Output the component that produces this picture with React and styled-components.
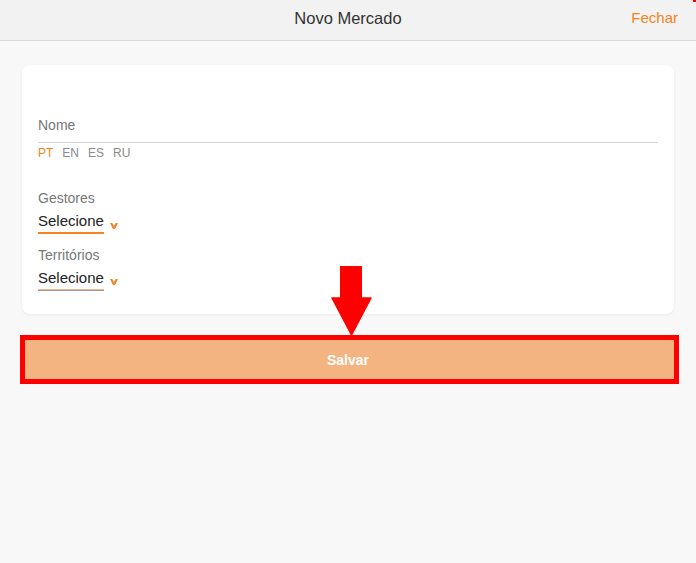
import styled, { createGlobalStyle } from "styled-components";

const GlobalStyle = createGlobalStyle`
  html, body {
    margin: 0;
    padding: 0;
    background: #f8f8f8;
    font-family: "Liberation Sans", Arial, sans-serif;
  }
  * { box-sizing: border-box; }
`;

const Page = styled.div`
  position: relative;
  min-height: 563px;
  background: #f8f8f8;
`;

const Header = styled.header`
  height: 41px;
  display: flex;
  align-items: center;
  justify-content: center;
  position: relative;
  background: #f2f2f2;
  border-bottom: 1px solid #d9d9d9;

  h1 {
    margin: 0;
    font-size: 16.5px;
    font-weight: 400;
    color: #333;
    padding-bottom: 3px;
  }
`;

const CloseLink = styled.a`
  position: absolute;
  right: 18px;
  top: 9px;
  font-size: 15px;
  color: #f58320;
  cursor: pointer;
`;

const Content = styled.main`
  padding: 24px 22px 0;
`;

const Card = styled.section`
  background: #fff;
  border-radius: 8px;
  box-shadow: 0 1px 3px rgba(0, 0, 0, 0.06);
  padding: 52px 16px 24px;
  height: 249px;
`;

const TextField = styled.div`
  label {
    display: block;
    font-size: 14px;
    line-height: 17px;
    color: #777;
    padding-bottom: 8px;
    border-bottom: 1px solid #d6d6d6;
  }
`;

const LangTabs = styled.div`
  display: flex;
  gap: 9px;
  margin-top: 3px;
  margin-bottom: 29px;
`;

const Lang = styled.span`
  font-size: 12px;
  line-height: 15px;
  color: ${(p) => (p.$active ? "#f58320" : "#8a8a8a")};
`;

const SelectField = styled.div`
  margin-bottom: 13px;
`;

const SelectLabel = styled.div`
  font-size: 14px;
  line-height: 17px;
  color: #777;
  margin-bottom: 5px;
`;

const SelectRow = styled.div`
  display: flex;
  align-items: center;
  gap: 6px;
`;

const SelectValue = styled.span`
  font-size: 15px;
  line-height: 18px;
  color: #222;
  padding-bottom: 2px;
  border-bottom: ${(p) => (p.$touched ? "1px solid #f3b68c" : "2px solid #f58320")};
  box-shadow: ${(p) => (p.$touched ? "0 1px 0 #9a9a9a" : "none")};
`;

const Chevron = () => (
  <svg width="8" height="6" viewBox="0 0 8 6" style={{ marginTop: 5 }}>
    <polygon points="0,0 2.2,0 4,3 5.8,0 8,0 5,6 3,6" fill="#f58320" />
  </svg>
);

const ButtonWrap = styled.div`
  position: relative;
  margin-top: 23px;

  &::after {
    content: "";
    position: absolute;
    left: -2px;
    right: -5px;
    top: -2px;
    bottom: -2px;
    border: 5px solid #ff0000;
    pointer-events: none;
  }
`;

const SaveButton = styled.button`
  display: block;
  width: 100%;
  height: 45px;
  border: none;
  background: #f4b482;
  color: #fff;
  font-family: "Liberation Sans", Arial, sans-serif;
  font-size: 14px;
  font-weight: 700;
`;

const Arrow = styled.svg`
  position: absolute;
  left: 331px;
  top: 266px;
`;

const CornerMark = styled.div`
  position: absolute;
  right: 0;
  top: 0;
  width: 3px;
  height: 2px;
  background: #ff0000;
`;

export default function App() {
  return (
    <Page>
      <GlobalStyle />
      <Header>
        <h1>Novo Mercado</h1>
        <CloseLink>Fechar</CloseLink>
      </Header>
      <Content>
        <Card>
          <TextField>
            <label>Nome</label>
          </TextField>
          <LangTabs>
            <Lang $active>PT</Lang>
            <Lang>EN</Lang>
            <Lang>ES</Lang>
            <Lang>RU</Lang>
          </LangTabs>
          <SelectField>
            <SelectLabel>Gestores</SelectLabel>
            <SelectRow>
              <SelectValue>Selecione</SelectValue>
              <Chevron />
            </SelectRow>
          </SelectField>
          <SelectField>
            <SelectLabel>Territórios</SelectLabel>
            <SelectRow>
              <SelectValue $touched>Selecione</SelectValue>
              <Chevron />
            </SelectRow>
          </SelectField>
        </Card>
        <ButtonWrap>
          <SaveButton>Salvar</SaveButton>
        </ButtonWrap>
      </Content>
      <Arrow width="41" height="70" viewBox="0 0 41 70">
        <rect x="9" y="0" width="22" height="34" fill="#ff0000" />
        <polygon points="1,32 40,32 20.5,69" fill="#ff0000" strokeLinejoin="round" stroke="#ff0000" strokeWidth="1.5" />
      </Arrow>
      <CornerMark />
    </Page>
  );
}
